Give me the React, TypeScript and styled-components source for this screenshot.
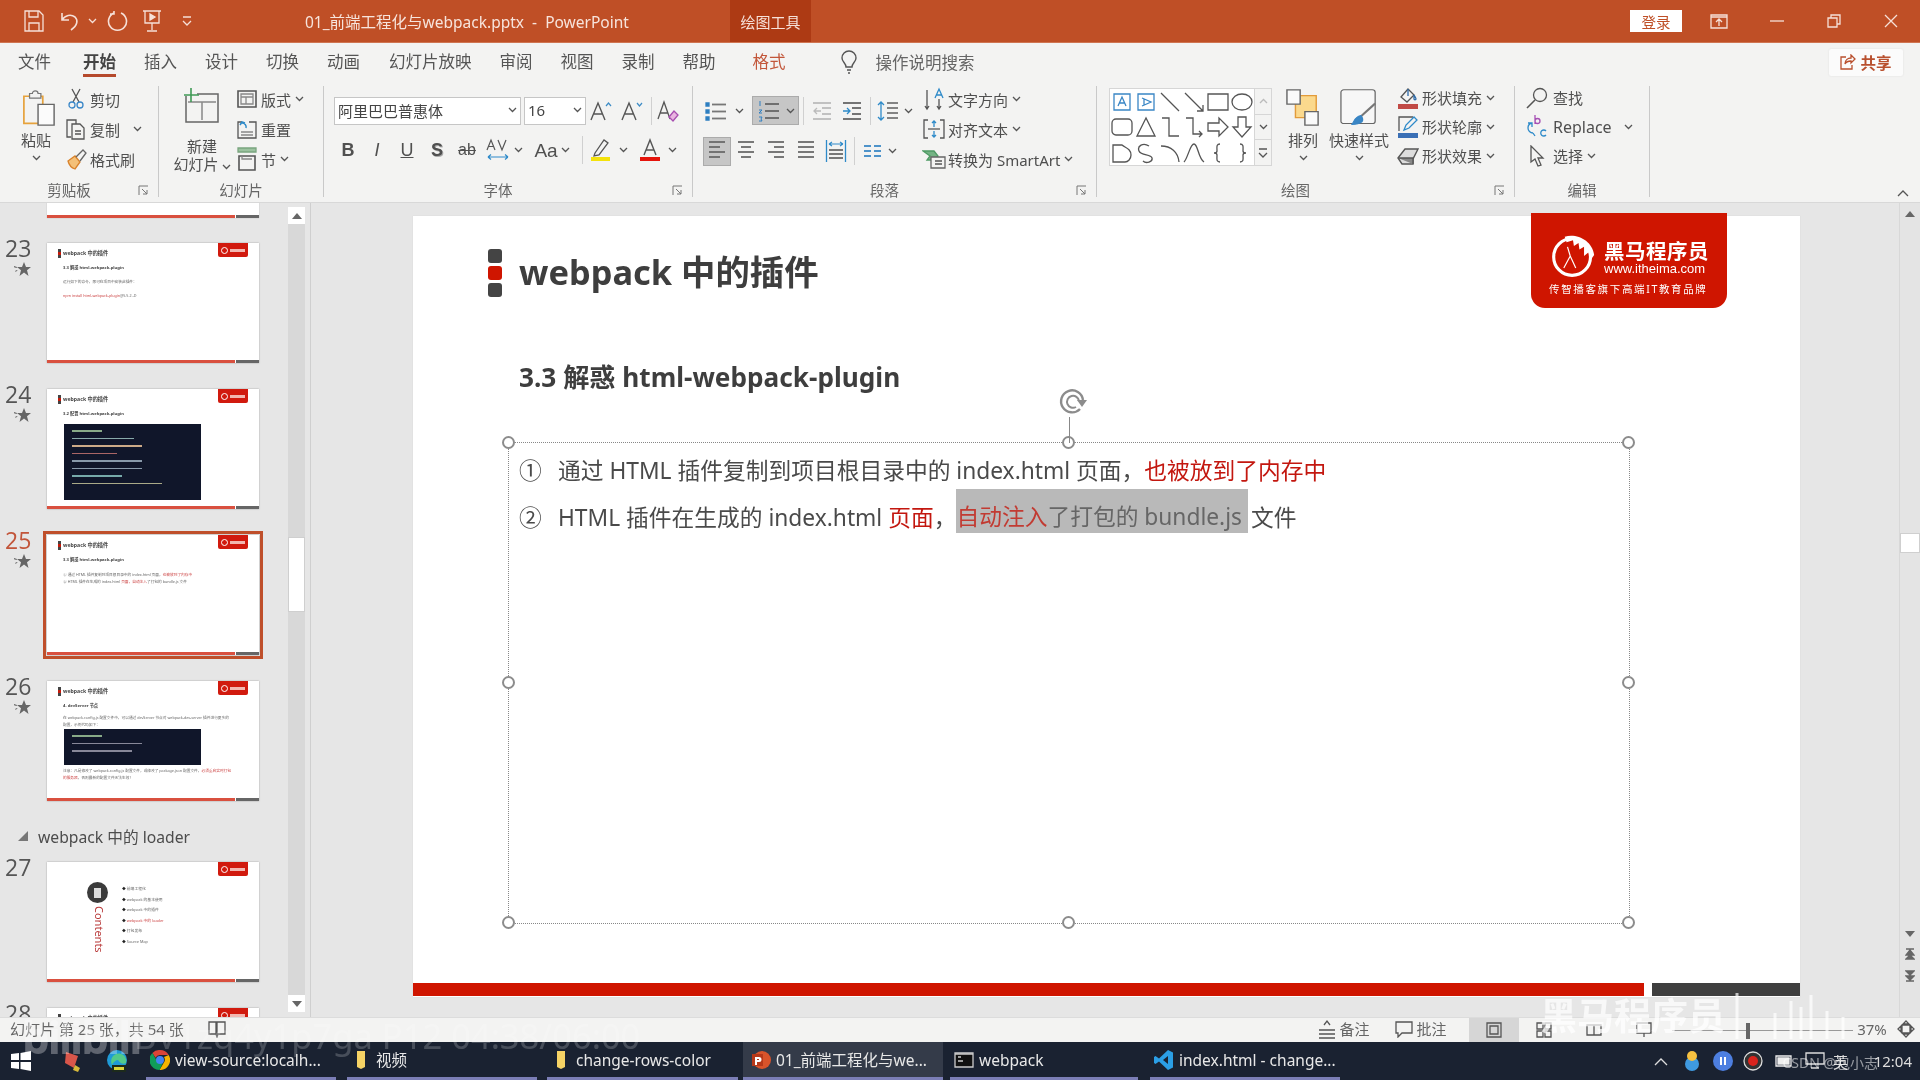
import React from "react";
import styled, { createGlobalStyle } from "styled-components";

const Global = createGlobalStyle`
  html, body { margin: 0; padding: 0; background: #e6e6e6; overflow: hidden; }
  * { box-sizing: border-box; }
  #root { width: 1920px; height: 1080px; }
`;
const UI = `"Noto Sans", "Noto Sans CJK SC", sans-serif`;

const Page = styled.div`
  position: relative; width: 1920px; height: 1080px; display: flex; flex-direction: column;
  overflow: hidden; font-family: ${UI}; color: #4a4a4a; background: #e6e6e6; filter: blur(0.35px);
`;
const Glyph = styled.svg`fill: none; stroke: #555; stroke-width: 1.3; flex: none; display: block;`;

/* ---------- title bar ---------- */
const TitleBar = styled.header`
  height: 43px; flex: none; background: #bf4f26; border-bottom: 1px solid #cf7552;
  display: flex; align-items: center; color: #fff;
`;
const TitleSlot = styled.div<{ $w: number; $ml?: number }>`
  width: ${p => p.$w}px; margin-left: ${p => p.$ml ?? 0}px; display: flex; justify-content: center; align-items: center; flex: none;
`;
const DocName = styled.div`font-size: 15.5px; margin-left: 112px; width: 425px; white-space: pre; color: #f7e4dc;`;
const ContextTab = styled.div`
  width: 81px; height: 42px; background: #ad3a14; display: flex; align-items: center; justify-content: center;
  font-size: 15px; color: #f6e0d8; align-self: flex-start;
`;
const SignIn = styled.div`
  margin-left: auto; width: 52px; height: 22px; background: #fff; color: #bf4f26; font-size: 14.5px;
  display: flex; align-items: center; justify-content: center;
`;

/* ---------- tabs ---------- */
const TabRow = styled.nav`
  height: 40px; flex: none; background: #f3f3f2; display: flex; align-items: center; padding: 0 0 2px 18px; position: relative;
`;
const Tab = styled.div<{ $on?: boolean; $accent?: boolean; $ml?: number }>`
  font-size: 16.5px; line-height: 24px; margin-left: ${p => p.$ml ?? 0}px; margin-right: 28px; position: relative; white-space: nowrap;
  font-weight: ${p => (p.$on ? 700 : 400)}; color: ${p => (p.$accent ? "#c2563a" : p.$on ? "#444" : "#555")};
  ${p => p.$on && `&::after { content: ""; position: absolute; left: 0; right: 0; bottom: -3px; height: 3px; background: #b5492c; }`}
`;
const SearchHint = styled.div`font-size: 16.5px; color: #666; margin-left: 17px;`;
const Share = styled.div`
  margin-left: auto; margin-right: 17px; width: 74px; height: 27px; background: #fbfbfb; border-radius: 2px; box-shadow: 0 0 2px #ddd;
  display: flex; align-items: center; justify-content: center; gap: 4px; color: #b9502e; font-weight: 700; font-size: 15.5px;
`;

/* ---------- ribbon ---------- */
const Ribbon = styled.section`
  height: 120px; flex: none; background: #f3f3f2; border-bottom: 1px solid #d8d8d8; display: flex; align-items: flex-start;
`;
const Group = styled.div<{ $w: number }>`
  width: ${p => p.$w}px; height: 111px; margin-top: 3px; border-right: 1px solid #c9c9c9; flex: none; display: flex; flex-direction: column;
`;
const GroupBody = styled.div`height: 89px; display: flex; align-items: flex-start;`;
const GroupFoot = styled.div`height: 22px; padding-top: 8px; display: flex; align-items: center;`;
const GroupName = styled.div`flex: 1; text-align: center; font-size: 14.5px; line-height: 14px; color: #666;`;
const Launcher = styled.div`width: 20px; display: flex; justify-content: flex-start;`;
const BigBtn = styled.div<{ $w: number; $ml?: number }>`
  width: ${p => p.$w}px; margin-left: ${p => p.$ml ?? 0}px; flex: none; display: flex; flex-direction: column; align-items: center;
  font-size: 15px; line-height: 18px; color: #4f4f4f; padding-top: 3px; white-space: nowrap;
`;
const BigIcon = styled.div<{ $h: number; $shift?: number }>`
  height: ${p => p.$h}px; padding-left: ${p => p.$shift ?? 0}px; display: flex; align-items: flex-end; justify-content: center;
`;
const BigLabel = styled.span<{ $mt?: number }>`margin-top: ${p => p.$mt ?? 0}px;`;
const BigChev = styled.span`display: flex; height: 6px; margin-top: 6px;`;
const SmallCol = styled.div<{ $ml?: number; $mt?: number; $rh?: number }>`
  margin-left: ${p => p.$ml ?? 0}px; margin-top: ${p => p.$mt ?? 0}px; flex: none;
  & > div { height: ${p => p.$rh ?? 30}px; }
`;
const SmallRow = styled.div`display: flex; align-items: center; font-size: 15px; color: #4f4f4f; white-space: nowrap;`;
const RowIcon = styled.div`width: 24px; margin-right: 2px; display: flex; justify-content: center; flex: none;`;
const RowLabel = styled.span<{ $s?: number }>`margin-left: 2px; font-size: ${p => p.$s ?? 15}px;`;
const Chev = styled.span<{ $ml?: number }>`display: inline-flex; margin-left: ${p => p.$ml ?? 4}px;`;
const ToolCol = styled.div<{ $w: number }>`width: ${p => p.$w}px; flex: none;`;
const ToolRow = styled.div<{ $mt: number; $h?: number }>`
  display: flex; align-items: center; margin-top: ${p => p.$mt}px; height: ${p => p.$h ?? 30}px;
`;
const Tool = styled.div<{ $w: number; $ml?: number; $on?: boolean }>`
  width: ${p => p.$w}px; margin-left: ${p => p.$ml ?? 0}px; height: 29px; flex: none; display: flex; align-items: center; justify-content: center; gap: 5px;
  font-size: 18px; color: #505050;
  ${p => p.$on && `background: #c6c6c6; border: 1px solid #ababab;`}
`;
const ToolSep = styled.div<{ $ml?: number }>`width: 1px; height: 28px; background: #d0d0d0; margin-left: ${p => p.$ml ?? 0}px; flex: none;`;
const FontBox = styled.div<{ $w: number; $ml?: number }>`
  width: ${p => p.$w}px; margin-left: ${p => p.$ml ?? 0}px; height: 28px; background: #fff; border: 1px solid #c6c6c6; flex: none;
  display: flex; align-items: center; justify-content: space-between; padding: 0 3px 2px 3px; font-size: 15px; color: #444;
`;
const Gallery = styled.div`
  width: 163px; height: 78px; margin: 2px 0 0 12px; background: #fff; border: 1px solid #d6d6d6; flex: none; display: flex;
`;
const ShapeGrid = styled.div`width: 144px; display: grid; grid-template-columns: repeat(6, 24px); grid-auto-rows: 25.6px; align-items: center; justify-items: center;`;
const GalleryScroll = styled.div`flex: 1; display: flex; flex-direction: column; background: #f3f3f2; border-left: 1px solid #d6d6d6;`;
const GalleryBtn = styled.div`flex: 1; display: flex; align-items: center; justify-content: center; border-bottom: 1px solid #d6d6d6; &:last-child { border: 0; }`;
const Collapse = styled.div`margin-left: auto; margin-right: 11px; margin-top: 106px;`;

/* ---------- main ---------- */
const Main = styled.main`flex: 1; min-height: 0; display: flex; background: #e6e6e6;`;
const Sidebar = styled.aside`width: 311px; flex: none; display: flex; border-right: 1px solid #cfcfcf;`;
const SlideList = styled.div`width: 288px; flex: none; overflow: hidden;`;
const TopStub = styled.div`
  width: 212px; height: 15px; margin: 0 0 25px 47px; background: #fff; display: flex; align-items: flex-end; box-shadow: 0 0 1px #aaa;
`;
const ThumbRow = styled.div`display: flex; height: 120px; margin-bottom: 26px; flex: none;`;
const NumCol = styled.div<{ $on?: boolean }>`
  width: 47px; flex: none; padding-left: 5px; font-size: 23px; line-height: 22px; margin-top: -6px; color: ${p => (p.$on ? "#c2553a" : "#555")};
  font-family: "Open Sans", sans-serif;
`;
const StarBox = styled.div`margin: 3px 0 0 9px;`;
const Thumb = styled.div<{ $on?: boolean }>`
  position: relative; width: 212px; height: 120px; background: #fff; box-shadow: 0 0 1.5px #999; flex: none; display: flex; flex-direction: column;
  ${p => p.$on && `outline: 3px solid #bf4f2b; outline-offset: 1px;`}
`;
const ThumbInner = styled.div`flex: 1; min-height: 0; padding: 0 0 0 11px; overflow: hidden; filter: blur(0.35px);`;
const MiniHead = styled.div`display: flex; align-items: center; height: 16px; margin-top: 2px; gap: 2px; font-size: 5.2px; font-weight: 700; color: #444;`;
const MiniBullet = styled.span`
  width: 3px; height: 9px; flex: none; background: linear-gradient(#444 0 33%, #c51a0a 33% 66%, #444 66%);
`;
const MiniSub = styled.div`font-size: 4.2px; font-weight: 700; color: #444; margin: 3px 0 0 5px; line-height: 8px; white-space: nowrap;`;
const MiniLine = styled.div<{ $mt?: number; $wrap?: boolean }>`
  font-size: 3.7px; color: #666; margin: ${p => p.$mt ?? 6}px 0 0 5px; line-height: 7px;
  ${p => (p.$wrap ? "width: 168px;" : "white-space: nowrap;")}
  & b { color: #c44; font-weight: 400; }
`;
const MiniCode = styled.div<{ $h: number; $mt: number }>`
  width: 137px; height: ${p => p.$h}px; margin: ${p => p.$mt}px 0 0 6px; background: #10162a; padding: 6px 8px; display: flex; flex-direction: column; gap: 6px;
`;
const CodeBar = styled.span<{ $w: number; $c: string }>`height: 1.5px; width: ${p => p.$w}px; background: ${p => p.$c}; display: block;`;
const MiniLogo = styled.div`
  position: absolute; right: 11px; top: 0; width: 30px; height: 14px; background: #d11a0e; border-radius: 0 0 2px 2px;
  display: flex; align-items: center; gap: 2px; padding-left: 3px;
`;
const MiniDot = styled.span`width: 7px; height: 7px; border: 1.2px solid #fff; border-radius: 50%;`;
const MiniMark = styled.span`width: 15px; height: 3px; background: #f2b7b0;`;
const MiniFoot = styled.div`height: 3px; flex: none; display: flex; gap: 1px; width: 100%;`;
const MiniRed = styled.span`flex: 1; background: #d9503f;`;
const MiniDark = styled.span`width: 23px; background: #666;`;
const ContentsWrap = styled.div`display: flex; height: 100%; padding: 20px 0 0 27px; gap: 13px;`;
const ContentsLeft = styled.div`width: 24px; display: flex; flex-direction: column; align-items: center; position: relative;`;
const ContentsCircle = styled.div`width: 21px; height: 21px; border-radius: 50%; background: #3b3b3b; display: flex; align-items: center; justify-content: center;`;
const ContentsPage = styled.span`width: 7px; height: 10px; background: #ddd;`;
const ContentsWord = styled.div`writing-mode: vertical-rl; font-size: 11px; line-height: 11px; color: #b93a3a; margin-top: 3px; margin-left: 5px;`;
const ContentsList = styled.div`display: flex; flex-direction: column; gap: 4.6px; padding-top: 4px; font-size: 3.8px; line-height: 6px; color: #666;`;
const ContentsItem = styled.div<{ $hot?: boolean }>`color: ${p => (p.$hot ? "#c44" : "#666")}; white-space: nowrap; &::before { content: "◆ "; color: #222; }`;
const SectionHead = styled.div`height: 35px; padding: 0 0 17px 18px; margin-bottom: 0; display: flex; align-items: center; gap: 10px; font-size: 15.7px; color: #4c4c4c;`;
const SideScroll = styled.div`width: 17px; margin: 4px 0 5px; background: #d8d8d8; display: flex; flex-direction: column; flex: none;`;
const ScrollBtn = styled.div<{ $h?: number }>`height: ${p => p.$h ?? 17}px; background: #fff; flex: none; display: flex; align-items: center; justify-content: center;`;
const ScrollGap = styled.div<{ $h?: number }>`${p => (p.$h ? `height: ${p.$h}px; flex: none;` : "flex: 1;")}`;
const ScrollThumb = styled.div<{ $h: number; $w?: number }>`height: ${p => p.$h}px; background: #fff; border: 1px solid #cfcfcf; flex: none;`;

const Stage = styled.div`flex: 1; min-width: 0; padding: 13px 0 0 102px;`;
const Slide = styled.article`
  position: relative; width: 1387px; height: 781px; background: #fff; display: flex; flex-direction: column; box-shadow: 0 0 1px #ccc;
`;
const SlideHead = styled.div`display: flex; align-items: center; gap: 17px; margin: 33px 0 0 75px; height: 48px; flex: none;`;
const Bullets = styled.div`display: flex; flex-direction: column; gap: 3px; width: 14px; flex: none;`;
const Bullet = styled.span<{ $red?: boolean }>`height: 14px; border-radius: 3px; background: ${p => (p.$red ? "#cf1500" : "#444")};`;
const SlideTitle = styled.h1`margin: -2px 0 0; font-size: 34.4px; line-height: 48px; font-weight: 700; color: #3e3e3e; white-space: nowrap;`;
const SlideSub = styled.h2`margin: 62px 0 0 106px; font-size: 26.2px; line-height: 36px; font-weight: 700; color: #3e3e3e; white-space: nowrap; flex: none;`;
const TextBox = styled.div`
  position: relative; width: 1122px; height: 482px; margin: 47px 0 0 95px; flex: none; border: 1px dotted #888; padding: 3px 0 0 10px;
`;
const Line = styled.div`display: flex; height: 47px; align-items: center; font-size: 22.75px; color: #4a4a4a; white-space: nowrap;`;
const Num = styled.span`width: 39px; flex: none;`;
const Red = styled.span`color: #c3170f;`;
const Marked = styled.span`
  background: #b9b9b9; color: #666; height: 44px; margin: -11px 3px 0 0; padding: 11px 6px 0 0; line-height: 33px;
  & em { font-style: normal; color: #c23b32; }
`;
const Handle = styled.span<{ $x: number; $y: number }>`
  position: absolute; left: ${p => p.$x * 100}%; top: ${p => p.$y * 100}%; width: 13px; height: 13px; margin: -7px 0 0 -7px;
  border-radius: 50%; background: #fff; border: 2px solid #8c8c8c;
`;
const RotateWrap = styled.div`position: absolute; left: 50%; top: -58px; margin-left: -13px; width: 32px; display: flex; flex-direction: column; align-items: center;`;
const RotateStem = styled.span`width: 1px; height: 26px; background: #888; margin-left: -6px;`;
const Logo = styled.div`
  position: absolute; left: 1118px; top: -3px; width: 196px; height: 95px; background: #cf1500; border-radius: 0 0 14px 14px; color: #fff;
  padding: 20px 0 0 18px;
`;
const LogoTop = styled.div`display: flex; gap: 7px; height: 46px;`;
const LogoWords = styled.div`display: flex; flex-direction: column; padding-top: 7px;`;
const LogoCn = styled.div`font-size: 20.5px; line-height: 22px; font-weight: 700; letter-spacing: .5px; white-space: nowrap;`;
const LogoUrl = styled.div`font-size: 13px; line-height: 14px; font-family: "Liberation Sans", sans-serif; white-space: nowrap;`;
const LogoTag = styled.div`font-size: 10.5px; line-height: 14px; margin-top: 3px; letter-spacing: 1.65px; white-space: nowrap;`;
const SlideFoot = styled.div`margin-top: auto; margin-bottom: 1px; height: 13px; flex: none; display: flex; gap: 8px;`;
const FootRed = styled.span`flex: 1; background: #cf1500;`;
const FootDark = styled.span`width: 148px; background: #3f3f3f;`;
const MainScroll = styled.div`width: 21px; flex: none; background: #e4e4e4; display: flex; flex-direction: column; align-items: center; border-left: 1px solid #d8d8d8; padding-top: 3px;`;
const MainScrollBtn = styled.div`width: 100%; height: 16px; display: flex; align-items: center; justify-content: center; flex: none;`;
const MainThumb = styled.div`width: 100%; height: 20px; background: #fff; border: 1px solid #cfcfcf; flex: none;`;

/* ---------- status ---------- */
const StatusBar = styled.footer`height: 25px; flex: none; background: #f3f3f2; border-top: 1px solid #dcdcdc; display: flex; align-items: center; font-size: 15px; color: #666; padding: 0 0 3px 10px;`;
const StatusText = styled.div`width: 198px; white-space: nowrap;`;
const StatusRight = styled.div`margin-left: auto; display: flex; align-items: center; height: calc(100% + 3px); align-self: flex-start;`;
const StatusItem = styled.div<{ $w?: number; $ml?: number }>`
  display: flex; align-items: center; gap: 3px; white-space: nowrap; height: 100%; justify-content: center; padding-bottom: 3px;
  margin-left: ${p => p.$ml ?? 0}px; ${p => p.$w && `width: ${p.$w}px;`}
`;
const ViewSlot = styled.div`height: 100%; margin-left: 18px;`;
const ViewBtn = styled.div<{ $on?: boolean }>`width: 50px; height: 100%; display: flex; align-items: center; justify-content: center; ${p => p.$on && `background: #d6d6d6;`}`;
const Slider = styled.div`width: 181px; height: 100%; position: relative; display: flex; align-items: center; margin-left: 3px;`;
const SliderLine = styled.span`width: 100%; height: 1px; background: #999;`;
const SliderKnob = styled.span`position: absolute; left: 74px; top: 5px; width: 4px; height: 16px; background: #666;`;

/* ---------- taskbar ---------- */
const Taskbar = styled.div`height: 38px; flex: none; background: #1a2231; display: flex; align-items: stretch; color: #e8e8e8;`;
const TaskSlot = styled.div<{ $w: number; $ml?: number }>`width: ${p => p.$w}px; margin-left: ${p => p.$ml ?? 0}px; flex: none; display: flex; align-items: center; justify-content: center;`;
const TaskItem = styled.div<{ $w: number; $ml: number; $on?: boolean }>`
  width: ${p => p.$w}px; margin-left: ${p => p.$ml}px; flex: none; display: flex; align-items: center; gap: 5px; padding-left: ${p => (p.$on ? 8 : 4)}px;
  font-size: 15.5px; border-bottom: 3px solid #7b7eb6; white-space: nowrap; background: ${p => (p.$on ? "#343b49" : "transparent")};
`;
const Tray = styled.div`margin-left: auto; display: flex; align-items: center; padding-right: 8px; position: relative;`;
const TrayText = styled.div<{ $ml: number; $w?: number }>`
  font-size: 15px; color: #ddd; white-space: nowrap; margin-left: ${p => p.$ml}px; text-align: right; ${p => p.$w && `width: ${p.$w}px;`}
`;
const TrayMark = styled.div`position: absolute; right: 42px; top: 10px; font-size: 14px; color: rgba(255,255,255,.55); white-space: nowrap;`;

/* ---------- watermarks ---------- */
const WaterLeft = styled.div`
  position: absolute; left: 30px; top: 1003px; display: flex; align-items: center; gap: 12px; color: rgba(255,255,255,.2); pointer-events: none; white-space: nowrap;
`;
const WaterBrand = styled.span`font-size: 44px; font-weight: 700; letter-spacing: -2px; width: 100px; color: rgba(255,255,255,.3); margin-top: 4px; margin-left: -8px;`;
const WaterCode = styled.span`font-size: 34.5px; font-family: "Noto Sans", sans-serif;`;
const WaterRight = styled.div`
  position: absolute; left: 1540px; top: 993px; display: flex; align-items: flex-end; color: rgba(255,255,255,.72); pointer-events: none; white-space: nowrap;
`;
const WaterName = styled.span`font-size: 37px; line-height: 46px; font-weight: 700;`;

/* ---------- icons ---------- */
const ChevD = ({ c = "#555" }: { c?: string }) => (
  <Glyph width="9" height="6" viewBox="0 0 9 6" style={{ stroke: c }}><path d="M1 1l3.5 3.5L8 1" /></Glyph>
);
const LaunchIc = () => (
  <Glyph width="11" height="11" viewBox="0 0 11 11" style={{ stroke: "#777", strokeWidth: 1 }}><path d="M1 10V1h9M4 4l5 5M9 5v4H5" /></Glyph>
);
const Lines = ({ y, x = [2, 2, 2], w = [18, 18, 18], c = "#777", sw = 1.8 }: { y: number[]; x?: number[]; w?: number[]; c?: string; sw?: number }) => (
  <>{y.map((v, i) => <path key={i} d={`M${x[i]} ${v}h${w[i]}`} stroke={c} strokeWidth={sw} />)}</>
);

const PasteIc = () => (
  <Glyph width="34" height="38" viewBox="0 0 36 42" preserveAspectRatio="none">
    <path d="M2 8h20v30H2z" stroke="#e6a23c" strokeWidth="1.8" />
    <path d="M8 8V5h3a3 3 0 016 0h3v5H8z" fill="#f3f3f2" stroke="#777" />
    <path d="M17 17h17v23H17z" fill="#fbfbfb" stroke="#666" strokeWidth="1.5" />
  </Glyph>
);
const CutIc = () => (
  <Glyph width="16" height="22" viewBox="0 0 16 22">
    <path d="M4 1l7 13M12 1L5 14" />
    <circle cx="4" cy="17" r="3" stroke="#3a87c8" />
    <circle cx="12" cy="17" r="3" stroke="#3a87c8" />
  </Glyph>
);
const CopyIc = () => (
  <Glyph width="22" height="22" viewBox="0 0 22 22">
    <path d="M6 19H2V2h9v4" /><path d="M7 6h8l4 4v11H7z" /><path d="M10 13h6M10 16h6" />
  </Glyph>
);
const BrushIc = () => (
  <Glyph width="22" height="22" viewBox="0 0 22 22">
    <path d="M3 13l7-5 5 6-5 7c-3-1-6-4-7-8z" fill="#f4c078" stroke="#d9822b" />
    <path d="M11 9l7-7 3 3-6 8" stroke="#666" />
  </Glyph>
);
const NewSlideIc = () => (
  <Glyph width="38" height="36" viewBox="0 0 38 36">
    <path d="M3 8v26h32V6H14" stroke="#666" strokeWidth="1.5" /><path d="M5 14h28M19 14v18" stroke="#888" strokeWidth="1.5" />
    <path d="M1 7h15M8 0v14" stroke="#3f9a55" strokeWidth="1.6" />
  </Glyph>
);
const LayoutIc = () => (
  <Glyph width="20" height="18" viewBox="0 0 20 18"><path d="M1 1h18v16H1z" strokeWidth="1.6" /><path d="M4 4h12v10H4zM9 7v7M4 7h12" stroke="#888" /></Glyph>
);
const ResetIc = () => (
  <Glyph width="20" height="19" viewBox="0 0 20 19"><path d="M5 2H1v16h18V2H12" /><path d="M4 12h12M4 15h12" stroke="#888" /><path d="M9 8a4 4 0 00-4-5M3 5l2-3 3 1" stroke="#2e8ac9" strokeWidth="1.5" /></Glyph>
);
const SectionIc = () => (
  <Glyph width="20" height="24" viewBox="0 0 20 24"><path d="M1 1h18v4H1z" fill="#9bc29f" stroke="#7aa57f" /><path d="M2 9h16v14H2z" strokeWidth="1.6" /><path d="M5 9v3h10" stroke="#888" /></Glyph>
);
const Fancy = styled.span<{ $s?: number; $c?: string; $w?: number; $st?: string; $dec?: string; $shadow?: boolean }>`
  font-family: "Liberation Sans", sans-serif; font-size: ${p => p.$s ?? 18}px; color: ${p => p.$c ?? "#505050"}; font-weight: ${p => p.$w ?? 400};
  font-style: ${p => p.$st ?? "normal"}; text-decoration: ${p => p.$dec ?? "none"}; line-height: 1;
  ${p => p.$shadow && "text-shadow: 1px 1px 0 #aaa;"}
`;
const GrowIc = ({ up }: { up: boolean }) => (
  <Glyph width="24" height="22" viewBox="0 0 24 22">
    <path d="M2 20L9 3l7 17M5 14h8" strokeWidth="1.4" />
    <path d={up ? "M17 6l2.5-3L22 6" : "M17 3l2.5 3L22 3"} stroke="#3d8cc6" strokeWidth="1.2" />
  </Glyph>
);
const ClearIc = () => (
  <Glyph width="24" height="24" viewBox="0 0 24 24"><path d="M2 20L8 3l6 17M4 14h8" strokeWidth="1.3" /><path d="M13 18l5-6 4 4-5 6z" fill="#e9b5e0" stroke="#a74fb0" /></Glyph>
);
const SpaceIc = () => (
  <Glyph width="24" height="24" viewBox="0 0 24 24">
    <path d="M1 12L5 2l4 10M2.5 8.5h5M12 2l4 10 4-10" strokeWidth="1.2" />
    <path d="M2 19h20M2 19l3-2.5M2 19l3 2.5M22 19l-3-2.5M22 19l-3 2.5" stroke="#2e8ac9" strokeWidth="1.2" />
  </Glyph>
);
const MarkerIc = () => (
  <Glyph width="22" height="24" viewBox="0 0 22 24"><path d="M5 15L14 2l4 3-9 12-5 1z" /><path d="M1 19h19v4H1z" fill="#f4e20b" stroke="none" /></Glyph>
);
const FontColorIc = () => (
  <Glyph width="22" height="24" viewBox="0 0 22 24"><path d="M5 17L11 2l6 15M7 12h8" strokeWidth="1.4" /><path d="M1 19h20v4H1z" fill="#e5140c" stroke="none" /></Glyph>
);
const BulletIc = () => (
  <Glyph width="24" height="22" viewBox="0 0 24 22">
    <path d="M2 3h3v3H2zM2 10h3v3H2zM2 17h3v3H2z" fill="#2e7fc1" stroke="#2e7fc1" /><Lines y={[4.5, 11.5, 18.5]} x={[8, 8, 8]} w={[14, 14, 14]} />
  </Glyph>
);
const NumberIc = () => (
  <Glyph width="24" height="22" viewBox="0 0 24 22">
    <path d="M3 1v5M2 10h3l-3 3h3M2 17h3l-1 2 1 2H2" stroke="#2e7fc1" strokeWidth="1" /><Lines y={[4, 11, 18]} x={[8, 8, 8]} w={[14, 14, 14]} c="#666" />
  </Glyph>
);
const IndentIc = ({ inc }: { inc?: boolean }) => (
  <Glyph width="20" height="20" viewBox="0 0 20 20">
    <Lines y={[2, 18]} w={[18, 18]} x={[1, 1]} c={inc ? "#666" : "#bbb"} /><Lines y={[7, 13]} w={[9, 9]} x={[10, 10]} c={inc ? "#666" : "#bbb"} />
    <path d={inc ? "M1 10h7M5 7l3 3-3 3" : "M9 10H2M5 7l-3 3 3 3"} stroke={inc ? "#2e8ac9" : "#bbb"} strokeWidth="1.3" />
  </Glyph>
);
const LineSpaceIc = () => (
  <Glyph width="22" height="22" viewBox="0 0 22 22">
    <path d="M4 2v18M1 5l3-3 3 3M1 17l3 3 3-3" stroke="#2e8ac9" strokeWidth="1.3" /><Lines y={[3, 8, 13, 18]} x={[10, 10, 10, 10]} w={[11, 11, 11, 11]} />
  </Glyph>
);
const AlignIc = ({ y, x, w }: { y?: number[]; x: number[]; w: number[] }) => (
  <Glyph width="20" height="22" viewBox="0 0 20 22"><Lines y={y ?? [2, 7, 12, 17]} x={x} w={w} c="#6a6a6a" /></Glyph>
);
const DistIc = () => (
  <Glyph width="22" height="24" viewBox="0 0 22 24">
    <path d="M1.5 1v22M20.5 1v22" stroke="#2e8ac9" strokeWidth="1.3" />
    <path d="M4 5h14M4 5l3-2M4 5l3 2M18 5l-3-2M18 5l-3 2" stroke="#2e8ac9" strokeWidth="1.1" />
    <Lines y={[11, 15, 19]} x={[4, 4, 4]} w={[14, 14, 14]} c="#6a6a6a" />
  </Glyph>
);
const ColumnsIc = () => (
  <Glyph width="18" height="14" viewBox="0 0 18 14"><Lines y={[2, 7, 12]} x={[0, 0, 0]} w={[7, 7, 7]} c="#3b88c6" /><Lines y={[2, 7, 12]} x={[10, 10, 10]} w={[7, 7, 7]} c="#3b88c6" /></Glyph>
);
const TextDirIc = () => (
  <Glyph width="20" height="24" viewBox="0 0 20 24"><path d="M3 3v19M1 19l2 3 2-3M15 12v10M13 19l2 3 2-3" /><path d="M11 11l4-9 4 9M12.5 8h5" stroke="#2e8ac9" /></Glyph>
);
const AlignTextIc = () => (
  <Glyph width="22" height="22" viewBox="0 0 22 22"><path d="M5 2H1v18h4M17 2h4v18h-4" /><path d="M5 11h12" /><path d="M11 3v6M9 5l2-2 2 2M11 13v6M9 17l2 2 2-2" stroke="#2e8ac9" /></Glyph>
);
const SmartIc = () => (
  <Glyph width="24" height="20" viewBox="0 0 24 20"><path d="M1 2h11l4 5-3 4H5l3-4z" fill="#74b384" stroke="#4e9a64" /><path d="M9 8h14v11H9z" fill="#f3f3f2" stroke="#666" /><path d="M13 12h7M13 15h7" /></Glyph>
);
const ArrangeIc = () => (
  <Glyph width="34" height="37" viewBox="0 0 36 44" preserveAspectRatio="none"><path d="M10 8h22v26H10z" fill="#fbd98d" stroke="#e29b3a" strokeWidth="1.5" /><path d="M1 1h14v17H1z" fill="#fafafa" stroke="#666" strokeWidth="1.5" /><path d="M20 27h14v16H20z" fill="#fafafa" stroke="#666" strokeWidth="1.5" /></Glyph>
);
const QuickIc = () => (
  <Glyph width="38" height="37" viewBox="0 0 40 46" preserveAspectRatio="none"><rect x="1" y="1" width="36" height="42" rx="3" fill="#f7f7f7" stroke="#666" strokeWidth="1.3" /><path d="M37 18L22 34" stroke="#777" strokeWidth="2.4" /><path d="M12 44c3-1 2-9 10-11 2 3 3 5 1 8-3 3-8 3-11 3z" fill="#3a86c5" stroke="#3a86c5" /></Glyph>
);
const FillIc = () => (
  <Glyph width="22" height="24" viewBox="0 0 22 24"><path d="M4 11l7-8 6 6-7 7z" /><path d="M11 3v7M17 9c1 2 2 3 2 4s-2 1-2 0z" stroke="#2e6aa8" /><path d="M1 18h20v5H1z" fill="#c14a45" stroke="none" /></Glyph>
);
const OutlineIc = () => (
  <Glyph width="22" height="24" viewBox="0 0 22 24"><path d="M16 2H2v14" /><path d="M7 15l2-5 8-8 3 3-8 8z" stroke="#2e8ac9" /><path d="M1 18h20v5H1z" fill="#3a6fb5" stroke="none" /></Glyph>
);
const EffectIc = () => (
  <Glyph width="22" height="20" viewBox="0 0 22 20"><path d="M1 12L8 3h13l-5 10v5H5z" fill="#ddd" stroke="#555" strokeWidth="1.4" /><path d="M1 12h15v6" stroke="#555" strokeWidth="1.4" fill="#888" /></Glyph>
);
const FindIc = () => (
  <Glyph width="22" height="22" viewBox="0 0 22 22"><circle cx="14" cy="8" r="6.5" strokeWidth="1.3" /><path d="M9 13l-8 8" strokeWidth="1.6" /></Glyph>
);
const ReplaceIc = () => (
  <Glyph width="24" height="26" viewBox="0 0 24 26">
    <path d="M10 1v9M10 7a2.500 2.500 0 105 0 2.500 2.500 0 10-5 0" stroke="#a64fb4" />
    <path d="M21 17a3 3 0 100 4" stroke="#2e8ac9" />
    <path d="M7 9a5 5 0 00-4 5 5 5 0 005 5M3 9l4 0 0 4M8 19l2 3" stroke="#2e8ac9" />
  </Glyph>
);
const PointerIc = () => (
  <Glyph width="16" height="22" viewBox="0 0 16 22"><path d="M2 1v16l4-3 3 7 3-1-3-7h5z" strokeWidth="1.3" /></Glyph>
);
const BulbIc = () => (
  <Glyph width="16" height="24" viewBox="0 0 16 24"><path d="M5 17c0-4-4-5-4-9a7 7 0 0114 0c0 4-4 5-4 9zM6 20h4M7 23h2" strokeWidth="1.4" /></Glyph>
);
const ShareIc = () => (
  <Glyph width="16" height="16" viewBox="0 0 16 16" style={{ stroke: "#b9502e" }}><path d="M6 3H1v12h11v-4" /><path d="M5 10c0-4 3-6 6-6V1l4 4-4 4V7c-3 0-5 1-6 3z" /></Glyph>
);
const Star = ({ c = "#666" }: { c?: string }) => (
  <Glyph width="17" height="14" viewBox="0 0 17 14" style={{ fill: c, stroke: "none" }}><path d="M10 0l2 5h5l-4 3.200L14.500 14 10 10.600 5.500 14 7 8.200 3 5h5zM0 4l3 1-.4 1-3-1zM1 9l2-1 .5.8-2 1z" /></Glyph>
);
const Tri = ({ up, c = "#666" }: { up?: boolean; c?: string }) => (
  <Glyph width="10" height="6" viewBox="0 0 10 6" style={{ fill: c, stroke: "none" }}><path d={up ? "M0 6l5-6 5 6z" : "M0 0l5 6 5-6z"} /></Glyph>
);
const HorseMark = () => (
  <Glyph width="48" height="46" viewBox="0 0 50 50" style={{ stroke: "#fff" }}>
    <circle cx="24" cy="26" r="20" strokeWidth="3.4" />
    <path d="M16 4C29 0 46 8 48 24L43 31 42 21 37 25 37 15 32 18 31 11 26 14 25 8 18 10Z" fill="#fff" stroke="none" />
    <path d="M15 38l7-13 6 13M22 25l-3-10" strokeWidth="1.3" />
  </Glyph>
);
const RotateIc = () => (
  <Glyph width="32" height="32" viewBox="0 0 32 32" style={{ stroke: "#8c8c8c" }}>
    <path d="M24 24a11 11 0 11 3-9" strokeWidth="2.4" /><path d="M20 22a6 6 0 113-6" strokeWidth="2" /><path d="M21 15h10l-5 7z" fill="#8c8c8c" stroke="none" />
  </Glyph>
);

const ShapeIcons: React.ReactNode[] = [
  <><path d="M3 3h16v16H3z" stroke="#3a86c5" /><path d="M7 15l4-9 4 9M8.500 12h5" stroke="#3a86c5" /></>,
  <><path d="M3 3h16v16H3z" stroke="#3a86c5" /><path d="M7 7l9 4-9 4M9 8v6" stroke="#3a86c5" /></>,
  <path d="M2 2l18 18" />, <path d="M2 2l18 18M20 14v6h-6" />,
  <path d="M1 3h20v16H1z" />, <ellipse cx="11" cy="11" rx="10" ry="8" />,
  <rect x="1" y="3" width="20" height="16" rx="4" />, <path d="M11 2L2 20h18z" />,
  <path d="M3 2h7v18h10" />, <path d="M3 2h7v16h9M16 15l3 3-3 3" />,
  <path d="M1 7h11V2l9 9-9 9v-5H1z" />, <path d="M7 1h8v10h5L11 21 2 11h5z" />,
  <path d="M2 3h9c4 3 9 4 9 10 0 4-3 7-6 7H2z" />, <path d="M14 4C8 0 2 4 4 9s12 3 13 7-6 6-9 3" />,
  <path d="M2 4c10 0 17 6 18 16" />, <path d="M1 20C5 16 7 2 11 2s4 14 10 18" />,
  <path d="M13 2c-4 0-3 3-3 7 0 2-2 2-3 2 1 0 3 0 3 2 0 4-1 7 3 7" />,
  <path d="M9 2c4 0 3 3 3 7 0 2 2 2 3 2-1 0-3 0-3 2 0 4 1 7-3 7" />,
];

const MiniHeader = () => <MiniHead><MiniBullet />webpack 中的插件</MiniHead>;
const Bars = ({ rows }: { rows: [number, string][] }) => <>{rows.map(([w, c], i) => <CodeBar key={i} $w={w} $c={c} />)}</>;
const Foot = () => <MiniFoot><MiniRed /><MiniDark /></MiniFoot>;
const MiniBadge = () => <MiniLogo><MiniDot /><MiniMark /></MiniLogo>;

const SlideThumb = ({ n, on, star = true, children }: { n: number; on?: boolean; star?: boolean; children: React.ReactNode }) => (
  <ThumbRow>
    <NumCol $on={on}>
      {n}
      {star && <StarBox><Star /></StarBox>}
    </NumCol>
    <Thumb $on={on}>
      <ThumbInner>{children}</ThumbInner>
      <MiniBadge />
      <Foot />
    </Thumb>
  </ThumbRow>
);

export default function App() {
  const handles: [number, number][] = [[0, 0], [0.5, 0], [1, 0], [0, 0.5], [1, 0.5], [0, 1], [0.5, 1], [1, 1]];
  return (
    <Page>
      <Global />
      <TitleBar>
        <TitleSlot $w={24} $ml={22}>
          <Glyph width="20" height="22" viewBox="0 0 20 22" style={{ stroke: "#f6e0d8" }}><path d="M1 1h14l4 4v16H1zM5 1v6h9V1M5 21v-8h10v8" /></Glyph>
        </TitleSlot>
        <TitleSlot $w={24} $ml={12}>
          <Glyph width="20" height="20" viewBox="0 0 20 20" style={{ stroke: "#f6e0d8", strokeWidth: 1.6 }}><path d="M2 2v7h7M2 9c3-5 9-6 13-3 3 3 3 8-4 13" /></Glyph>
        </TitleSlot>
        <TitleSlot $w={8} $ml={6}><ChevD c="#f6e0d8" /></TitleSlot>
        <TitleSlot $w={24} $ml={10}>
          <Glyph width="22" height="22" viewBox="0 0 22 22" style={{ stroke: "#f6e0d8", strokeWidth: 1.6 }}><path d="M14 3a9 9 0 11-7 0M7 1v3H3" /></Glyph>
        </TitleSlot>
        <TitleSlot $w={24} $ml={10}>
          <Glyph width="20" height="22" viewBox="0 0 20 22" style={{ stroke: "#f6e0d8" }}><path d="M1 1h18M3 1v12h14V1M10 13v7M5 21h10" /><path d="M8 4l5 3-5 3z" fill="#f6e0d8" /></Glyph>
        </TitleSlot>
        <TitleSlot $w={12} $ml={17}>
          <Glyph width="10" height="10" viewBox="0 0 10 10" style={{ stroke: "#f6e0d8" }}><path d="M1 1h8M1 5l4 4 4-4" /></Glyph>
        </TitleSlot>
        <DocName>01_前端工程化与webpack.pptx  -  PowerPoint</DocName>
        <ContextTab>绘图工具</ContextTab>
        <SignIn>登录</SignIn>
        <TitleSlot $w={24} $ml={25}>
          <Glyph width="18" height="15" viewBox="0 0 18 15" style={{ stroke: "#f6e0d8" }}><path d="M1 1h16v13H1zM1 3h16M9 12V6M6 8l3-3 3 3" /></Glyph>
        </TitleSlot>
        <TitleSlot $w={24} $ml={34}>
          <Glyph width="14" height="2" viewBox="0 0 14 2" style={{ stroke: "#f6e0d8" }}><path d="M0 1h14" /></Glyph>
        </TitleSlot>
        <TitleSlot $w={24} $ml={33}>
          <Glyph width="14" height="14" viewBox="0 0 14 14" style={{ stroke: "#f6e0d8" }}><path d="M1 4h9v9H1zM4 4V1h9v9h-3" /></Glyph>
        </TitleSlot>
        <TitleSlot $w={24} $ml={33}>
          <Glyph width="14" height="14" viewBox="0 0 14 14" style={{ stroke: "#f6e0d8" }}><path d="M1 1l12 12M13 1L1 13" /></Glyph>
        </TitleSlot>
        <TitleSlot $w={17} />
      </TitleBar>

      <TabRow>
        <Tab>文件</Tab><Tab $on $ml={4}>开始</Tab><Tab>插入</Tab><Tab>设计</Tab><Tab>切换</Tab><Tab>动画</Tab>
        <Tab $ml={1}>幻灯片放映</Tab><Tab>审阅</Tab><Tab>视图</Tab><Tab>录制</Tab><Tab>帮助</Tab>
        <Tab $accent $ml={9}>格式</Tab>
        <TitleSlot $w={20} $ml={25}><BulbIc /></TitleSlot>
        <SearchHint>操作说明搜索</SearchHint>
        <Share><ShareIc />共享</Share>
      </TabRow>

      <Ribbon>
        <Group $w={159}>
          <GroupBody>
            <BigBtn $w={46} $ml={13}>
              <BigIcon $h={38} $shift={6}><PasteIc /></BigIcon>
              <BigLabel $mt={4}>粘贴</BigLabel>
              <BigChev><ChevD /></BigChev>
            </BigBtn>
            <SmallCol $ml={5} $mt={-2}>
              <SmallRow><RowIcon><CutIc /></RowIcon>剪切</SmallRow>
              <SmallRow><RowIcon><CopyIc /></RowIcon>复制<Chev $ml={13}><ChevD /></Chev></SmallRow>
              <SmallRow><RowIcon><BrushIc /></RowIcon>格式刷</SmallRow>
            </SmallCol>
          </GroupBody>
          <GroupFoot><GroupName>剪贴板</GroupName><Launcher><LaunchIc /></Launcher></GroupFoot>
        </Group>

        <Group $w={165}>
          <GroupBody>
            <BigBtn $w={58} $ml={14}>
              <BigIcon $h={35}><NewSlideIc /></BigIcon>
              <BigLabel $mt={13}>新建</BigLabel>
              <span>幻灯片<Chev $ml={3}><ChevD /></Chev></span>
            </BigBtn>
            <SmallCol $ml={4} $mt={-2}>
              <SmallRow><RowIcon><LayoutIc /></RowIcon>版式<Chev><ChevD /></Chev></SmallRow>
              <SmallRow><RowIcon><ResetIc /></RowIcon>重置</SmallRow>
              <SmallRow><RowIcon><SectionIc /></RowIcon>节<Chev><ChevD /></Chev></SmallRow>
            </SmallCol>
          </GroupBody>
          <GroupFoot><GroupName>幻灯片</GroupName></GroupFoot>
        </Group>

        <Group $w={369}>
          <GroupBody>
            <ToolCol $w={368}>
              <ToolRow $mt={11} $h={28}>
                <FontBox $w={187} $ml={10}>阿里巴巴普惠体<ChevD /></FontBox>
                <FontBox $w={62} $ml={3}>16<ChevD /></FontBox>
                <Tool $w={30}><GrowIc up /></Tool>
                <Tool $w={30} $ml={1}><GrowIc up={false} /></Tool>
                <ToolSep $ml={4} />
                <Tool $w={30} $ml={1}><ClearIc /></Tool>
              </ToolRow>
              <ToolRow $mt={10}>
                <Tool $w={28} $ml={10}><Fancy $w={700}>B</Fancy></Tool>
                <Tool $w={30}><Fancy $st="italic">I</Fancy></Tool>
                <Tool $w={30}><Fancy $dec="underline">U</Fancy></Tool>
                <Tool $w={30}><Fancy $w={700} $shadow>S</Fancy></Tool>
                <Tool $w={30}><Fancy $s={16} $dec="line-through">ab</Fancy></Tool>
                <Tool $w={32}><SpaceIc /></Tool>
                <Tool $w={8}><ChevD /></Tool>
                <Tool $w={30} $ml={9}><Fancy $s={19}>Aa</Fancy></Tool>
                <Tool $w={8}><ChevD /></Tool>
                <ToolSep $ml={13} />
                <Tool $w={30} $ml={3}><MarkerIc /></Tool>
                <Tool $w={8} $ml={3}><ChevD /></Tool>
                <Tool $w={30} $ml={8}><FontColorIc /></Tool>
                <Tool $w={8} $ml={3}><ChevD /></Tool>
              </ToolRow>
            </ToolCol>
          </GroupBody>
          <GroupFoot><GroupName>字体</GroupName><Launcher><LaunchIc /></Launcher></GroupFoot>
        </Group>

        <Group $w={404}>
          <GroupBody>
            <ToolCol $w={229}>
              <ToolRow $mt={10} $h={29}>
                <Tool $w={30} $ml={8}><BulletIc /></Tool>
                <Tool $w={8} $ml={4}><ChevD /></Tool>
                <Tool $w={47} $ml={9} $on><NumberIc /><ChevD /></Tool>
                <ToolSep $ml={4} />
                <Tool $w={30} $ml={3}><IndentIc /></Tool>
                <Tool $w={30}><IndentIc inc /></Tool>
                <ToolSep $ml={3} />
                <Tool $w={30} $ml={2}><LineSpaceIc /></Tool>
                <Tool $w={8} $ml={1}><ChevD /></Tool>
              </ToolRow>
              <ToolRow $mt={11}>
                <Tool $w={28} $ml={10} $on><AlignIc x={[2, 2, 2, 2]} w={[16, 11, 16, 11]} /></Tool>
                <Tool $w={30}><AlignIc x={[2, 5, 2, 5]} w={[16, 10, 16, 10]} /></Tool>
                <Tool $w={30}><AlignIc x={[2, 8, 2, 8]} w={[16, 10, 16, 10]} /></Tool>
                <Tool $w={30}><AlignIc x={[2, 2, 2, 2]} w={[16, 16, 16, 16]} /></Tool>
                <Tool $w={30}><DistIc /></Tool>
                <ToolSep $ml={3} />
                <Tool $w={30} $ml={3}><ColumnsIc /></Tool>
                <Tool $w={8}><ChevD /></Tool>
              </ToolRow>
            </ToolCol>
            <SmallCol $mt={-2}>
              <SmallRow><RowIcon><TextDirIc /></RowIcon>文字方向<Chev><ChevD /></Chev></SmallRow>
              <SmallRow><RowIcon><AlignTextIc /></RowIcon>对齐文本<Chev><ChevD /></Chev></SmallRow>
              <SmallRow><RowIcon><SmartIc /></RowIcon>转换为 SmartArt<Chev><ChevD /></Chev></SmallRow>
            </SmallCol>
          </GroupBody>
          <GroupFoot><GroupName>段落</GroupName><Launcher><LaunchIc /></Launcher></GroupFoot>
        </Group>

        <Group $w={418}>
          <GroupBody>
            <Gallery>
              <ShapeGrid>
                {ShapeIcons.map((s, i) => <Glyph key={i} width="22" height="22" viewBox="0 0 22 22">{s}</Glyph>)}
              </ShapeGrid>
              <GalleryScroll>
                <GalleryBtn><Glyph width="9" height="6" viewBox="0 0 9 6" style={{ stroke: "#bbb" }}><path d="M1 5l3.5-3.5L8 5" /></Glyph></GalleryBtn>
                <GalleryBtn><ChevD /></GalleryBtn>
                <GalleryBtn><Glyph width="10" height="10" viewBox="0 0 10 10"><path d="M1 1h8M1 5l4 4 4-4" /></Glyph></GalleryBtn>
              </GalleryScroll>
            </Gallery>
            <BigBtn $w={48} $ml={7}>
              <BigIcon $h={37}><ArrangeIc /></BigIcon>
              <BigLabel $mt={5}>排列</BigLabel>
              <BigChev><ChevD /></BigChev>
            </BigBtn>
            <BigBtn $w={60} $ml={2}>
              <BigIcon $h={37}><QuickIc /></BigIcon>
              <BigLabel $mt={5}>快速样式</BigLabel>
              <BigChev><ChevD /></BigChev>
            </BigBtn>
            <SmallCol $ml={7} $mt={-3} $rh={29}>
              <SmallRow><RowIcon><FillIc /></RowIcon>形状填充<Chev><ChevD /></Chev></SmallRow>
              <SmallRow><RowIcon><OutlineIc /></RowIcon>形状轮廓<Chev><ChevD /></Chev></SmallRow>
              <SmallRow><RowIcon><EffectIc /></RowIcon>形状效果<Chev><ChevD /></Chev></SmallRow>
            </SmallCol>
          </GroupBody>
          <GroupFoot><GroupName>绘图</GroupName><Launcher><LaunchIc /></Launcher></GroupFoot>
        </Group>

        <Group $w={135}>
          <GroupBody>
            <SmallCol $ml={10} $mt={-3} $rh={29}>
              <SmallRow><RowIcon><FindIc /></RowIcon><RowLabel>查找</RowLabel></SmallRow>
              <SmallRow><RowIcon><ReplaceIc /></RowIcon><RowLabel $s={16}>Replace</RowLabel><Chev $ml={12}><ChevD /></Chev></SmallRow>
              <SmallRow><RowIcon><PointerIc /></RowIcon><RowLabel>选择</RowLabel><Chev><ChevD /></Chev></SmallRow>
            </SmallCol>
          </GroupBody>
          <GroupFoot><GroupName>编辑</GroupName></GroupFoot>
        </Group>
        <Collapse>
          <Glyph width="12" height="8" viewBox="0 0 12 8"><path d="M1 7l5-5 5 5" /></Glyph>
        </Collapse>
      </Ribbon>

      <Main>
        <Sidebar>
          <SlideList>
            <TopStub><Foot /></TopStub>
            <SlideThumb n={23}>
              <MiniHeader />
              <MiniSub>3.3 解惑 html-webpack-plugin</MiniSub>
              <MiniLine>运行如下的命令，即可在项目中安装此插件：</MiniLine>
              <MiniLine $mt={7}><b>npm install html-webpack-plugin</b>@5.5.2 -D</MiniLine>
            </SlideThumb>
            <SlideThumb n={24}>
              <MiniHeader />
              <MiniSub>3.2 配置 html-webpack-plugin</MiniSub>
              <MiniCode $h={76} $mt={6}>
                <Bars rows={[[30, "#8a8"], [62, "#8aa"], [70, "#ca8"], [45, "#a66"], [70, "#89a"], [70, "#89a"], [50, "#7aa"], [90, "#aa8"]]} />
              </MiniCode>
            </SlideThumb>
            <SlideThumb n={25} on>
              <MiniHeader />
              <MiniSub>3.3 解惑 html-webpack-plugin</MiniSub>
              <MiniLine $mt={7}>① 通过 HTML 插件复制到项目根目录中的 index.html 页面，<b>也被放到了内存中</b></MiniLine>
              <MiniLine $mt={0}>② HTML 插件在生成的 index.html <b>页面，自动注入</b>了打包的 bundle.js 文件</MiniLine>
            </SlideThumb>
            <SlideThumb n={26}>
              <MiniHeader />
              <MiniSub>4. devServer 节点</MiniSub>
              <MiniLine $mt={4} $wrap>在 webpack.config.js 配置文件中，可以通过 devServer 节点对 webpack-dev-server 插件进行更多的配置，示例代码如下：</MiniLine>
              <MiniCode $h={36} $mt={1}>
                <Bars rows={[[30, "#8a8"], [70, "#889"], [60, "#889"]]} />
              </MiniCode>
              <MiniLine $mt={2} $wrap>注意：凡是修改了 webpack.config.js 配置文件，或修改了 package.json 配置文件，<b>必须重启实时打包的服务器</b>，否则最新的配置文件无法生效！</MiniLine>
            </SlideThumb>
            <SectionHead><Glyph width="10" height="10" viewBox="0 0 10 10" style={{ fill: "#777", stroke: "none" }}><path d="M10 0v10H0z" /></Glyph>webpack 中的 loader</SectionHead>
            <SlideThumb n={27} star={false}>
              <ContentsWrap>
                <ContentsLeft>
                  <ContentsCircle><ContentsPage /></ContentsCircle>
                  <ContentsWord>Contents</ContentsWord>
                </ContentsLeft>
                <ContentsList>
                  <ContentsItem>前端工程化</ContentsItem>
                  <ContentsItem>webpack 的基本使用</ContentsItem>
                  <ContentsItem>webpack 中的插件</ContentsItem>
                  <ContentsItem $hot>webpack 中的 loader</ContentsItem>
                  <ContentsItem>打包发布</ContentsItem>
                  <ContentsItem>Source Map</ContentsItem>
                </ContentsList>
              </ContentsWrap>
            </SlideThumb>
            <SlideThumb n={28} star={false}><MiniHeader /></SlideThumb>
          </SlideList>
          <SideScroll>
            <ScrollBtn><Tri up /></ScrollBtn>
            <ScrollGap $h={313} />
            <ScrollThumb $h={75} />
            <ScrollGap />
            <ScrollBtn><Tri /></ScrollBtn>
          </SideScroll>
        </Sidebar>

        <Stage>
          <Slide>
            <SlideHead>
              <Bullets><Bullet /><Bullet $red /><Bullet /></Bullets>
              <SlideTitle>webpack 中的插件</SlideTitle>
            </SlideHead>
            <SlideSub>3.3 解惑 html-webpack-plugin</SlideSub>
            <TextBox>
              <Line><Num>①</Num>通过 HTML 插件复制到项目根目录中的 index.html 页面，<Red>也被放到了内存中</Red></Line>
              <Line><Num>②</Num>HTML 插件在生成的 index.html&nbsp;<Red>页面</Red>，<Marked><em>自动注入</em>了打包的 bundle.js</Marked>文件</Line>
              {handles.map(([x, y], i) => <Handle key={i} $x={x} $y={y} />)}
              <RotateWrap><RotateIc /><RotateStem /></RotateWrap>
            </TextBox>
            <SlideFoot><FootRed /><FootDark /></SlideFoot>
            <Logo>
              <LogoTop>
                <HorseMark />
                <LogoWords>
                  <LogoCn>黑马程序员</LogoCn>
                  <LogoUrl>www.itheima.com</LogoUrl>
                </LogoWords>
              </LogoTop>
              <LogoTag>传智播客旗下高端IT教育品牌</LogoTag>
            </Logo>
          </Slide>
        </Stage>

        <MainScroll>
          <MainScrollBtn><Tri up /></MainScrollBtn>
          <ScrollGap $h={311} />
          <MainThumb />
          <ScrollGap />
          <MainScrollBtn><Tri /></MainScrollBtn>
          <ScrollGap $h={4} />
          <MainScrollBtn><Glyph width="10" height="12" viewBox="0 0 10 12" style={{ fill: "#666", stroke: "#666" }}><path d="M1 1h8M5 2L1 7h8zM5 7l-4 4h8z" /></Glyph></MainScrollBtn>
          <ScrollGap $h={6} />
          <MainScrollBtn><Glyph width="10" height="12" viewBox="0 0 10 12" style={{ fill: "#666", stroke: "#666" }}><path d="M1 1l4 4 4-4zM1 6l4 4 4-4zM1 11h8" /></Glyph></MainScrollBtn>
          <ScrollGap $h={33} />
        </MainScroll>
      </Main>

      <StatusBar>
        <StatusText>幻灯片 第 25 张，共 54 张</StatusText>
        <Glyph width="18" height="18" viewBox="0 0 18 18"><path d="M1 2h7v12H1zM9 2h8v12h-8zM8 14l1 3 1-3" /></Glyph>
        <StatusRight>
          <StatusItem $w={60}>
            <Glyph width="18" height="20" viewBox="0 0 18 20"><path d="M1 11h16M1 15h16M1 19h16M6 6l3-4 3 4" /></Glyph>备注
          </StatusItem>
          <StatusItem $w={60} $ml={17}>
            <Glyph width="18" height="18" viewBox="0 0 18 18"><path d="M1 2h16v11H7l-4 4v-4H1z" /></Glyph>批注
          </StatusItem>
          <ViewSlot><ViewBtn $on><Glyph width="16" height="16" viewBox="0 0 16 16"><path d="M1 1h14v14H1zM4 4h8v8H4z" /></Glyph></ViewBtn></ViewSlot>
          <ViewBtn><Glyph width="16" height="16" viewBox="0 0 16 16"><path d="M1 1h6v6H1zM9 1h6v6H9zM1 9h6v6H1zM9 9h6v6H9z" /></Glyph></ViewBtn>
          <ViewBtn><Glyph width="16" height="16" viewBox="0 0 16 16"><path d="M1 3h14v10H1zM8 3v10" /></Glyph></ViewBtn>
          <ViewBtn><Glyph width="16" height="16" viewBox="0 0 16 16"><path d="M1 1h14v10H1zM8 11v4" /></Glyph></ViewBtn>
          <Slider><SliderLine /><SliderKnob /></Slider>
          <StatusItem $w={38}>37%</StatusItem>
          <StatusItem $w={29}>
            <Glyph width="18" height="18" viewBox="0 0 18 18"><path d="M9 1l3 3H6zM9 17l-3-3h6zM1 9l3-3v6zM17 9l-3 3V6zM5 5h8v8H5z" /></Glyph>
          </StatusItem>
        </StatusRight>
      </StatusBar>

      <Taskbar>
        <TaskSlot $w={42}>
          <Glyph width="20" height="20" viewBox="0 0 20 20" style={{ fill: "#fff", stroke: "none" }}><path d="M0 3l8-1v7H0zM9.500 2L20 0v9H9.500zM0 11h8v7l-8-1zM9.500 11H20v9L9.500 18z" /></Glyph>
        </TaskSlot>
        <TaskSlot $w={40} $ml={11}>
          <Glyph width="20" height="22" viewBox="0 0 20 22" style={{ stroke: "none" }}><path d="M3 2l12 4-4 12-9-5z" fill="#d9564a" /><path d="M12 15l5 3-2 4-5-2z" fill="#d6b93a" /></Glyph>
        </TaskSlot>
        <TaskSlot $w={30} $ml={9}>
          <Glyph width="22" height="24" viewBox="0 0 22 24" style={{ stroke: "none" }}><circle cx="11" cy="11" r="10" fill="#1f9ad6" /><path d="M6 16c-3-7 3-13 9-11 4 1 6 5 5 9-3 2-6 0-8-3-2 0-5 2-6 5z" fill="#52c98a" /><path d="M6 16h14v7H6z" fill="#1c2a1c" /><path d="M8 18h10v3H8z" fill="#d9d43a" /></Glyph>
        </TaskSlot>
        <TaskItem $w={190} $ml={14}>
          <Glyph width="20" height="20" viewBox="0 0 20 20" style={{ stroke: "none" }}><path d="M10 0a10 10 0 018.700 5H10a5 5 0 00-4.500 2.800L2.400 2.900A10 10 0 0110 0z" fill="#db4437" /><path d="M18.700 5A10 10 0 019.500 20l4.400-7.500A5 5 0 0014 7z" fill="#f4b400" /><path d="M2.400 2.900L6.700 10.500a5 5 0 006.300 2L9.500 20A10 10 0 012.400 2.900z" fill="#0f9d58" /><circle cx="10" cy="10" r="4" fill="#4285f4" /></Glyph>
          view-source:localh...
        </TaskItem>
        <TaskItem $w={190} $ml={11}>
          <Glyph width="20" height="20" viewBox="0 0 20 20" style={{ stroke: "none" }}><path d="M6 1h8v16l-4 2-4-2z" fill="#f6d365" /></Glyph>
          视频
        </TaskItem>
        <TaskItem $w={191} $ml={10}>
          <Glyph width="20" height="20" viewBox="0 0 20 20" style={{ stroke: "none" }}><path d="M6 1h8v16l-4 2-4-2z" fill="#f6d365" /></Glyph>
          change-rows-color
        </TaskItem>
        <TaskItem $w={200} $ml={5} $on>
          <Glyph width="20" height="20" viewBox="0 0 20 20" style={{ stroke: "none" }}><circle cx="11" cy="10" r="9" fill="#d9542b" /><path d="M1 4h11v12H1z" fill="#b7391a" /><path d="M4 7h4a2 2 0 010 5H6v3H4zM6 9v1h2V9z" fill="#fff" /></Glyph>
          01_前端工程化与we...
        </TaskItem>
        <TaskItem $w={188} $ml={7}>
          <Glyph width="20" height="18" viewBox="0 0 20 18" style={{ stroke: "#ccc" }}><path d="M1 2h18v14H1z" fill="#111" /><path d="M4 6h3M4 10h5M1 3h18" /></Glyph>
          webpack
        </TaskItem>
        <TaskItem $w={190} $ml={12}>
          <Glyph width="20" height="20" viewBox="0 0 20 20" style={{ stroke: "none" }}><path d="M14 0l5 2.500v15L14 20 5 11.500 1.500 14 0 13V7l1.500-1L5 8.500zM14 6l-5 4 5 4z" fill="#2b9fe6" /></Glyph>
          index.html - change...
        </TaskItem>
        <Tray>
          <TitleSlot $w={20}><Glyph width="14" height="9" viewBox="0 0 14 9" style={{ stroke: "#ddd" }}><path d="M1 8l6-6 6 6" /></Glyph></TitleSlot>
          <TitleSlot $w={24} $ml={9}><Glyph width="20" height="22" viewBox="0 0 20 22" style={{ stroke: "none" }}><circle cx="10" cy="14" r="7" fill="#3f9ae0" /><circle cx="10" cy="6" r="5" fill="#f6c141" /></Glyph></TitleSlot>
          <TitleSlot $w={24} $ml={7}><Glyph width="20" height="20" viewBox="0 0 20 20" style={{ stroke: "none" }}><circle cx="10" cy="10" r="10" fill="#4d7fe0" /><path d="M7 6h2v8H7zM11 6h2v8h-2z" fill="#fff" /></Glyph></TitleSlot>
          <TitleSlot $w={24} $ml={6}><Glyph width="20" height="20" viewBox="0 0 20 20" style={{ stroke: "#ddd" }}><circle cx="10" cy="10" r="9" fill="#333" /><circle cx="10" cy="10" r="5" fill="#d9231c" stroke="none" /></Glyph></TitleSlot>
          <TitleSlot $w={24} $ml={6}><Glyph width="20" height="14" viewBox="0 0 20 14" style={{ stroke: "#eee" }}><path d="M3 2h15v10H3z" /><path d="M5 4h11v6H5z" fill="#eee" /></Glyph></TitleSlot>
          <TitleSlot $w={22} $ml={9}><Glyph width="20" height="18" viewBox="0 0 20 18" style={{ stroke: "#ddd" }}><path d="M1 1h18v11H1zM6 16h8" /></Glyph></TitleSlot>
          <TrayText $ml={7}>英</TrayText>
          <TrayText $ml={4} $w={60}>12:04</TrayText>
          <TrayMark>CSDN @包小志</TrayMark>
        </Tray>
      </Taskbar>

      <WaterLeft><WaterBrand>bilibili</WaterBrand><WaterCode>BV1zq4y1p7ga P12 04:38/06:00</WaterCode></WaterLeft>
      <WaterRight>
        <WaterName>黑马程序员</WaterName>
        <Glyph width="130" height="46" viewBox="0 0 130 46" style={{ stroke: "rgba(255,255,255,.7)", strokeWidth: 3 }}>
          <path d="M12 0v46M50 20v26M66 8v38M76 14v32M86 2v44M102 18v28M118 24v22" />
        </Glyph>
      </WaterRight>
    </Page>
  );
}
